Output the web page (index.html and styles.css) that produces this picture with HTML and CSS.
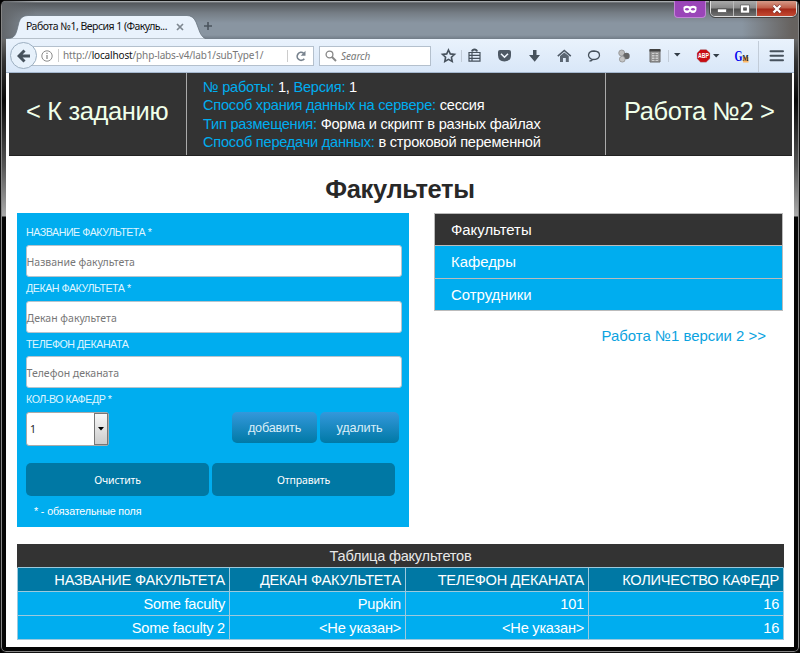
FILE: index.html
```html
<!DOCTYPE html>
<html lang="ru">
<head>
<meta charset="utf-8">
<title>Работа №1, Версия 1 (Факультеты)</title>
<link rel="stylesheet" href="styles.css">
</head>
<body>
<div class="window">
  <div class="titlebar">
    <div class="tab">
      <svg class="tab-shape" width="200" height="24" viewBox="0 0 200 24"><path d="M0 24V23.500C7 23.500 9 22 11 15L13 7Q15 .5 22 .5H181Q187 .5 190 7L193 15C195 21 198 23.500 200 23.500V24Z" fill="#e9f2fc" stroke="#68737e" stroke-width=".8"/></svg>
      <span class="tab-title">Работа №1, Версия 1 (Факуль...</span>
      <svg class="tab-close" width="8" height="8" viewBox="0 0 8 8"><path d="M1 1L7 7M7 1L1 7" stroke="#7e8790" stroke-width="1.700"/></svg>
    </div>
    <svg class="tab-new" width="10" height="10" viewBox="0 0 10 10"><path d="M5 1V9M1 5H9" stroke="#4b545e" stroke-width="1.600"/></svg>
    <div class="private"><svg width="14" height="9" viewBox="0 0 14 9"><path d="M.5 2Q3 0 7 1.500Q11 0 13.500 2Q14 8 10 8Q8 8 7 6.500Q6 8 4 8Q0 8 .5 2Z" fill="#fff"/><ellipse cx="4" cy="4.200" rx="1.900" ry="1.200" fill="#9a45b8"/><ellipse cx="10" cy="4.200" rx="1.900" ry="1.200" fill="#9a45b8"/></svg></div>
    <div class="controls">
      <div class="control"><svg width="12" height="10" viewBox="0 0 12 10"><rect x="1.500" y="5" width="9" height="3.500" fill="#fff" stroke="#444" stroke-width=".6"/></svg></div>
      <div class="control"><svg width="12" height="10" viewBox="0 0 12 10"><path d="M1.500 1H10.500V9H1.500ZM4.500 3.700V6.300H7.500V3.700Z" fill="#fff" fill-rule="evenodd" stroke="#444" stroke-width=".6"/></svg></div>
      <div class="control control-close"><svg width="12" height="10" viewBox="0 0 12 10"><path d="M2.500 1.500L9.500 8.500M9.500 1.500L2.500 8.500" stroke="#733" stroke-width="3.400"/><path d="M2.500 1.500L9.500 8.500M9.500 1.500L2.500 8.500" stroke="#fff" stroke-width="2.300"/></svg></div>
    </div>
  </div>

  <div class="toolbar">
    <div class="back"><svg width="14" height="14" viewBox="0 0 14 14"><path d="M7.500 1.500L2 7L7.500 12.500M2.500 7H13" fill="none" stroke="#47525d" stroke-width="3"/></svg></div>
    <div class="address">
      <svg class="info" width="12" height="12" viewBox="0 0 12 12"><circle cx="6" cy="6" r="5.200" fill="none" stroke="#8c8c8c"/><path d="M6 5V9M6 2.700V4" stroke="#8c8c8c" stroke-width="1.300"/></svg>
      <span class="url">http://<b>localhost</b>/php-labs-v4/lab1/subType1/</span>
      <span class="reload"><svg width="12" height="12" viewBox="0 0 12 12"><path d="M9.300 8.800A4 4 0 1 1 8.500 3" fill="none" stroke="#78838e" stroke-width="1.700"/><path d="M10.500 .8V5.800H5.700Z" fill="#78838e"/></svg></span>
    </div>
    <div class="search"><svg width="12" height="12" viewBox="0 0 12 12"><circle cx="4.500" cy="4.500" r="3.400" fill="none" stroke="#888" stroke-width="1.300"/><path d="M7 7L11 11" stroke="#888" stroke-width="2"/></svg><span>Search</span></div>
    <svg class="icons" width="362" height="34" viewBox="431 39 362 34">
      <g fill="none" stroke="#47525d" stroke-width="1.600">
        <path d="M448.500 50L450.300 53.900L454.500 54.400L451.400 57.200L452.200 61.400L448.500 59.300L444.800 61.400L445.600 57.200L442.500 54.400L446.700 53.900Z"/>
        <path d="M469 52.500H480V61.200H469ZM469 55.300H480M469 58.300H480M472 53V61" stroke-width="1.200"/><path d="M472 51.500Q472.500 49.500 474.500 49.500Q476.500 49.500 477 51.500" stroke-width="2"/>
        <path d="M589.500 61Q592 61 592.500 59.500Q588.500 58 588.500 55Q589 51 594 51Q599.500 51.200 599.500 55.200Q599.500 59.500 592.500 59.500" stroke-width="1.300"/>
      </g>
      <path d="M461.500 50V62M668.500 50V62M758.500 41V72" stroke="#c2ccd8"/>
      <path d="M498 52Q498 50 500 50H509Q511 50 511 52V55Q511 61.500 504.500 61.500Q498 61.500 498 55Z" fill="#4e5965"/>
      <path d="M501 53.700L504.500 57.200L508 53.700" fill="none" stroke="#eef5fd" stroke-width="1.600"/>
      <path d="M533 50H536.500V55H540L534.700 61.800L529 55H533Z" fill="#47525d"/>
      <path d="M557.800 56.200L564.300 50.500L570.800 56.200" fill="none" stroke="#4e5965" stroke-width="1.600"/><path d="M560 56L564.300 52.500L568.800 56V62H565.800V58H563V62H560Z" fill="#5b6672"/>
      <circle cx="621.700" cy="53" r="3" fill="#bbb" stroke="#888" stroke-width=".7"/><circle cx="626.500" cy="56" r="3.200" fill="#666"/><circle cx="622.300" cy="59.200" r="2.900" fill="#c4c4c4" stroke="#888" stroke-width=".7"/>
      <path d="M650 50H660V62H650Z" fill="#999" stroke="#6a6a6a"/><path d="M649.500 49H660.500V51.500H649.500Z" fill="#414141"/><path d="M652 53H658V61H652Z" fill="#ccc"/><path d="M652 54.500H658M652 57H658M652 59.500H658M655 53V61" stroke="#777" stroke-width=".7"/>
      <path d="M674 53H680.500L677.200 56.500ZM713 54H719.500L716.200 57.500Z" fill="#333d47"/>
      <path d="M700.500 49.500H706.200L710 53V58.500L706.200 62.300H700.500L697 58.500V53Z" fill="#c70d12" stroke="#a8b4bd" stroke-width=".4"/>
      <text class="abp" x="703.500" y="58.300" text-anchor="middle" textLength="11" lengthAdjust="spacingAndGlyphs">ABP</text>
      <path d="M743 57H748.500V62.500H743Z" fill="#ffb763"/><text class="logo-g" x="734.500" y="61" textLength="8" lengthAdjust="spacingAndGlyphs">G</text><text class="logo-m" x="742.500" y="61" textLength="6" lengthAdjust="spacingAndGlyphs">M</text>
      <path d="M770.500 51.200H783M770.500 55.700H783M770.500 60.200H783" stroke="#47525d" stroke-width="2" stroke-linecap="round"/>
    </svg>
  </div>

  <div class="page">
    <header class="top">
      <a class="nav prev"><span>&lt; К заданию</span></a>
      <div class="details">
        <div><i>№ работы:</i> 1, <i>Версия:</i> 1</div>
        <div><i>Способ храния данных на сервере:</i> сессия</div>
        <div><i>Тип размещения:</i> Форма и скрипт в разных файлах</div>
        <div><i>Способ передачи данных:</i> в строковой переменной</div>
      </div>
      <a class="nav next"><span>Работа №2 &gt;</span></a>
    </header>

    <h1>Факультеты</h1>

    <div class="columns">
      <form class="form">
        <label>НАЗВАНИЕ ФАКУЛЬТЕТА *</label>
        <div class="field">Название факультета</div>
        <label>ДЕКАН ФАКУЛЬТЕТА *</label>
        <div class="field">Декан факультета</div>
        <label>ТЕЛЕФОН ДЕКАНАТА</label>
        <div class="field">Телефон деканата</div>
        <label>КОЛ-ВО КАФЕДР *</label>
        <div class="count-row">
          <div class="select"><span>1</span><div class="select-arrow"><svg width="6" height="4" viewBox="0 0 6 4"><path d="M0 0H6L3 3.500Z" fill="#000"/></svg></div></div>
          <div class="small-button add">добавить</div>
          <div class="small-button remove">удалить</div>
        </div>
        <div class="actions"><div class="button">Очистить</div><div class="button">Отправить</div></div>
        <div class="note">* - обязательные поля</div>
      </form>
      <aside>
        <nav class="menu"><a class="active">Факультеты</a><a>Кафедры</a><a>Сотрудники</a></nav>
        <a class="version">Работа №1 версии 2 &gt;&gt;</a>
      </aside>
    </div>

    <table>
      <colgroup><col class="c1"><col class="c2"><col class="c3"><col class="c4"></colgroup>
      <tr class="caption"><td colspan="4">Таблица факультетов</td></tr>
      <tr class="head"><td>НАЗВАНИЕ ФАКУЛЬТЕТА</td><td>ДЕКАН ФАКУЛЬТЕТА</td><td>ТЕЛЕФОН ДЕКАНАТА</td><td>КОЛИЧЕСТВО КАФЕДР</td></tr>
      <tr><td>Some faculty</td><td>Pupkin</td><td>101</td><td>16</td></tr>
      <tr><td>Some faculty 2</td><td>&lt;Не указан&gt;</td><td>&lt;Не указан&gt;</td><td>16</td></tr>
    </table>
  </div>
</div>
</body>
</html>
```
FILE: styles.css
```css
* { box-sizing: border-box; }
body { margin: 0; background: #000; font-family: "Liberation Sans", Arial, sans-serif; }
svg { display: block; flex: none; }
.window {
  width: 800px; height: 653px; padding: 0 5px 5px; border: 1px solid #111; border-radius: 6px; overflow: hidden;
  background: linear-gradient(#777 0, #686868 38px, #333 60px, #080808 100px, #555 165px, #aaa 215px, #050505 216px);
  box-shadow: inset 0 0 0 1px #858585;
}
.titlebar {
  height: 38px; margin: 0 -4px; padding: 0 0 0 4px; display: flex; align-items: flex-start;
  background: linear-gradient(90deg, #62666a 0, transparent 35px, transparent 740px, #66625f 790px),
    linear-gradient(#c3c6c9 0, #54585d 2px, #757d85 12px, #8995a1 22px, #8995a1 34px, #717c87 38px);
}
.tab { width: 200px; height: 24px; margin-top: 14px; display: flex; align-items: center; position: relative; font: 10.5px "Noto Sans", sans-serif; color: #111; white-space: nowrap; }
.tab-shape { position: absolute; inset: 0; }
.tab-title { position: relative; margin: -2px 0 0 20px; width: 142px; letter-spacing: -.51px; }
.tab-close { position: relative; margin: 0 0 0 8px; }
.tab-new { margin: 20px 0 0 -3px; }
.private { width: 32px; height: 17px; margin-left: 461px; background: #9a45b8; border: 1px solid #c383d6; border-top: 0; border-radius: 0 0 4px 4px; display: grid; place-items: center; }
.controls { display: flex; margin-left: 4px; height: 16px; border: 1px solid #ddd; border-top: 0; border-radius: 0 0 5px 5px; outline: 1px solid #444; overflow: hidden; }
.control { width: 23px; display: grid; place-items: center; background: linear-gradient(#aaa 0, #888 7px, #4c4c4c 8px, #777 16px); border-right: 1px solid #bbb; }
.control-close { width: 39px; background: linear-gradient(#d69a88 0, #bf5d48 7px, #a42818 8px, #c94d35 16px); border: 0; }
.toolbar { height: 34px; display: flex; align-items: center; background: linear-gradient(#e9f2fc, #d9e7f8); border-bottom: 1px solid #a5b8cf; }
.back { width: 27px; height: 27px; margin-left: 4px; border: 1px solid #9caec0; border-radius: 50%; background: #e7f1fb; display: grid; place-items: center; position: relative; z-index: 1; }
.address { width: 283px; height: 20px; margin-left: -6px; padding-left: 9px; display: flex; align-items: center; border: 1px solid #b4c0cd; background: #fff; font: 10px "Noto Sans", sans-serif; }
.url { width: 229px; margin-left: 5px; padding-left: 4px; line-height: 13px; letter-spacing: -.15px; border-left: 1px solid #ccc; color: #777; white-space: nowrap; }
.url b { color: #111; font-weight: 400; }
.reload { width: 26px; border-left: 1px solid #ccc; display: grid; place-items: center; }
.search { width: 112px; height: 20px; margin-left: 5px; padding-left: 5px; display: flex; gap: 4px; align-items: center; background: #fff; border: 1px solid #b4c0cd; font: italic 10px "Noto Sans", sans-serif; letter-spacing: -.1px; color: #777; }
.abp { font: bold 6.5px "Liberation Sans", sans-serif; fill: #fff; }
.logo-g { font: bold 14px "Liberation Serif", serif; fill: #0000ef; }
.logo-m { font: bold 8px "Liberation Serif", serif; fill: #222; }
.page { height: 574px; background: #fff; }
.top { width: 783px; height: 83px; margin-left: 3px; display: flex; background: #333; color: #fff; border-bottom: 1px solid #222; }
.nav { display: flex; align-items: center; font-size: 25.5px; letter-spacing: -.38px; color: #f0ffe9; white-space: nowrap; }
.nav span { position: relative; top: -3px; }
.prev { width: 178px; padding-left: 17px; border-right: 1px solid #aaa; }
.next { flex: 1; padding-left: 18px; }
.details { width: 419px; padding: 5px 0 0 16px; border-right: 1px solid #aaa; font-size: 14.6px; line-height: 18.3px; letter-spacing: -.24px; white-space: nowrap; }
.details i { font-style: normal; color: #00adef; }
h1 { margin: 0; padding-top: 17px; height: 57px; font-size: 25.5px; letter-spacing: -.35px; line-height: 33px; text-align: center; color: #282828; }
.columns { display: flex; padding-left: 11px; gap: 25px; }
.form { width: 392px; height: 314px; padding: 8.3px 7px 0 9px; background: #00adef; color: #dff5ff; }
.form label { display: block; height: 23.700px; padding-top: 4px; font-size: 10.7px; line-height: 14px; letter-spacing: -.48px; }
.field { height: 32px; line-height: 32px; background: #fff; border: 1px solid #b6c4cd; border-radius: 3px; color: #777; font-family: "Noto Sans", sans-serif; font-size: 10.500px; text-indent: -.5px; }
.count-row { display: flex; height: 51px; }
.select { width: 83px; height: 34px; display: flex; justify-content: space-between; align-items: center; padding-left: 3px; background: #fff; border: 1px solid #aaa; border-radius: 3px; color: #222; font: 10.500px "Noto Sans", sans-serif; }
.select-arrow { width: 14px; height: 32px; background: linear-gradient(#f7f7f7, #ccc); border: 1px solid #777; display: grid; place-items: center; }
.small-button { height: 31px; border-radius: 5px; display: grid; place-items: center; font-size: 12.7px; letter-spacing: -.2px; color: #d9eef8; background: linear-gradient(#3498db, #0079a6); }
.add { width: 85px; margin-left: 123px; }
.remove { width: 79px; margin-left: 3px; }
.actions { display: flex; gap: 3px; }
.button { width: 183px; height: 33px; display: grid; place-items: center; background: #0078a4; border-radius: 5px; color: #fff; font: 10.500px "Noto Sans", sans-serif; letter-spacing: -.15px; }
.note { padding: 8px 0 0 8px; font-size: 10.700px; line-height: 15px; letter-spacing: -.13px; color: #fff; }
aside { width: 349px; display: flex; flex-direction: column; }
.menu { border: 1px solid #bbb; border-bottom: 0; }
.menu a { display: block; height: 32.3px; padding-left: 16px; background: #00adef; color: #fff; border-bottom: 1px solid #bbb; font-size: 14.9px; line-height: 32px; }
.menu .active { background: #333; }
.version { align-self: flex-end; margin: 16px 17px 0 0; font-size: 14.95px; line-height: 18px; color: #0ba3df; }
table { width: 767px; margin: 17px 0 0 11px; border-collapse: separate; border-spacing: 0; table-layout: fixed; color: #fff; font-size: 14.6px; line-height: 18px; letter-spacing: -.24px; }
.c1 { width: 213px; } .c2 { width: 176px; } .c3 { width: 183px; } .c4 { width: 195px; }
td { height: 24px; padding: 1px 4px 0 0; text-align: right; background: #00adef; border: solid #9cc9dd; border-width: 0 1px 1px 0; white-space: nowrap; }
td:first-child { border-left-width: 1px; }
.caption td { padding: 0; text-align: center; color: #e8e8e8; background: #333; border-left-color: #333; border-right-color: #333; }
.head td { background: #0078a4; }
```
